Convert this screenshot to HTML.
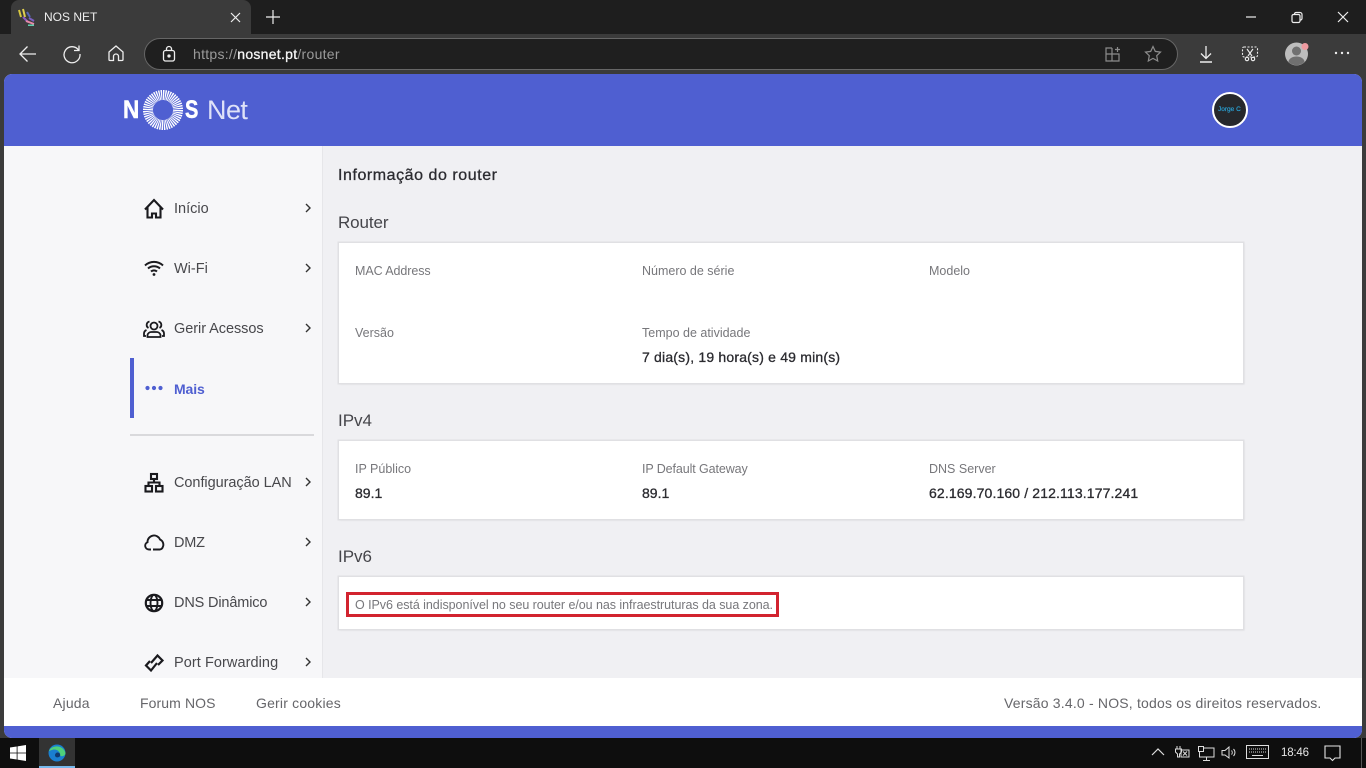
<!DOCTYPE html>
<html lang="pt">
<head>
<meta charset="utf-8">
<title>NOS NET</title>
<style>
html,body{margin:0;padding:0;width:1366px;height:768px;overflow:hidden;background:#3b3b3b;font-family:"Liberation Sans",sans-serif}
div,span.t,svg{position:absolute}
.t{position:absolute;white-space:nowrap;line-height:20px;height:20px}
.nav{font-size:14.5px;color:#48484c;left:174px}
.lab{font-size:12.5px;color:#77777b}
.val{font-size:14px;color:#2b2b30;-webkit-text-stroke:.3px #2b2b30}
.h2{font-size:17px;color:#45454a;left:338px}
.card{left:339px;width:904px;background:#fff;box-shadow:0 0 0 1.5px #e0e0e3,1px 1px 2px #d8d8dc}
.foot{font-size:14px;color:#66666a;letter-spacing:.19px}
.chev{left:304px;width:8px;height:10px}
.ic{left:143px;width:22px;height:22px}
</style>
</head>
<body>
<!-- browser chrome -->
<div style="left:0;top:0;width:1366px;height:34px;background:#1e1e1e"></div>
<div style="left:0;top:34px;width:1366px;height:40px;background:#3b3b3b"></div>
<div style="left:11px;top:0;width:240px;height:34px;background:#3b3b3b;border-radius:8px 8px 0 0"></div>
<svg style="left:17px;top:8px" width="18" height="18" viewBox="0 0 18 18" fill="none" stroke-width="2">
<path d="M2 2l2 7" stroke="#d8c840"/><path d="M6 1l2 8" stroke="#e0d050"/><path d="M10 4l3 5" stroke="#5a6ac8" opacity=".9"/><path d="M6 9l5 5" stroke="#8a5ac0"/><path d="M9 13l8 3" stroke="#e88aa8"/><path d="M12 10l5 3" stroke="#7a60c0"/><path d="M11 17.500h6" stroke="#60d0b0"/>
</svg>
<span class="t" style="left:44px;top:7px;font-size:12px;color:#eee">NOS NET</span>
<svg style="left:230px;top:12px" width="11" height="11" viewBox="0 0 11 11" stroke="#eee" stroke-width="1.2"><path d="M1 1l9 9M10 1l-9 9"/></svg>
<svg style="left:265px;top:9px" width="16" height="16" viewBox="0 0 16 16" stroke="#eee" stroke-width="1.2"><path d="M8 1v14M1 8h14"/></svg>
<svg style="left:1245px;top:11px" width="110" height="14" viewBox="0 0 110 14" fill="none" stroke="#eee" stroke-width="1.2">
<path d="M1 6h10"/>
<rect x="47" y="3.5" width="8" height="8" rx="1.5"/><path d="M49.5 3.5v-.5a1.5 1.5 0 0 1 1.5-1.5h4a2 2 0 0 1 2 2v4a1.5 1.5 0 0 1-1.5 1.5h-.5"/>
<path d="M93 1l10 10M103 1l-10 10"/>
</svg>
<svg style="left:18px;top:44px" width="20" height="20" viewBox="0 0 20 20" fill="none" stroke="#eee" stroke-width="1.3"><path d="M2 10h16M9.5 2.500L2 10l7.5 7.500"/></svg>
<svg style="left:62px;top:44px" width="20" height="20" viewBox="0 0 20 20" fill="none" stroke="#eee" stroke-width="1.3"><path d="M16.5 6A8 8 0 1 0 18 10"/><path d="M17 1.500V6.500h-5"/></svg>
<svg style="left:107px;top:44px" width="18" height="18" viewBox="0 0 18 18" fill="none" stroke="#eee" stroke-width="1.3"><path d="M2 8l7-6 7 6v7.500a1 1 0 0 1-1 1h-3.500v-4a2.500 2.500 0 0 0-5 0v4H3a1 1 0 0 1-1-1z"/></svg>
<div style="left:144px;top:38px;width:1032px;height:30px;background:#1f1f1f;border:1px solid #666;border-radius:16px"></div>
<svg style="left:162px;top:45px" width="14" height="18" viewBox="0 0 14 18" fill="none" stroke="#eee" stroke-width="1.3"><rect x="1.5" y="5.500" width="11" height="10.500" rx="2"/><path d="M4.5 5.500V4a2.500 2.500 0 0 1 5 0v1.500"/><circle cx="7" cy="11" r="1" fill="#eee"/></svg>
<span class="t" style="left:193px;top:44px;font-size:14px;color:#9a9a9a;letter-spacing:.28px">https://<span style="color:#f6f6f6;-webkit-text-stroke:.3px #f6f6f6">nosnet.pt</span>/router</span>
<svg style="left:1104px;top:45px" width="18" height="18" viewBox="0 0 18 18" fill="none" stroke="#8c8c8c" stroke-width="1.2"><path d="M8 3H2v13h13V9H2M8 3v13M11 4.500h5M13.500 2v5"/></svg>
<svg style="left:1144px;top:45px" width="18" height="18" viewBox="0 0 18 18" fill="none" stroke="#8c8c8c" stroke-width="1.2"><path d="M9 1.500l2.300 4.900 5.200.7-3.800 3.600 1 5.300L9 13.400 4.300 16l1-5.300L1.500 7.100l5.200-.7z"/></svg>
<svg style="left:1198px;top:45px" width="16" height="18" viewBox="0 0 16 18" fill="none" stroke="#eee" stroke-width="1.3"><path d="M8 1v12M3 8.500L8 13.500l5-5"/><path d="M2 17h12" stroke-width="1.5"/></svg>
<svg style="left:1241px;top:45px" width="18" height="18" viewBox="0 0 18 18" fill="none" stroke="#eee" stroke-width="1.1"><rect x="1.5" y="2" width="15" height="10" rx="1.5" stroke-dasharray="2 1.500"/><path d="M6 4l5 7M12 4L7 11"/><circle cx="6" cy="14" r="1.700"/><circle cx="12" cy="14" r="1.700"/></svg>
<svg style="left:1284px;top:41px" width="28" height="26" viewBox="0 0 28 26"><circle cx="12.5" cy="13" r="11.500" fill="#bdbdbd"/><circle cx="12.5" cy="10" r="4.500" fill="#707070"/><path d="M4.500 21a8 5.500 0 0 1 16 0 11.500 11.500 0 0 1-16 0z" fill="#707070"/><circle cx="21" cy="5.500" r="3.500" fill="#ee9aa0"/></svg>
<svg style="left:1334px;top:50px" width="16" height="6" viewBox="0 0 16 6" fill="#eee"><circle cx="2" cy="3" r="1.200"/><circle cx="8" cy="3" r="1.200"/><circle cx="14" cy="3" r="1.200"/></svg>

<!-- app window -->
<div style="left:4px;top:74px;width:1358px;height:664px;background:#f0f0f3;border-radius:8px;overflow:hidden">
  <div style="left:0;top:0;width:1358px;height:72px;background:#4f5fd1"></div>
  <div style="left:0;top:72px;width:318px;height:532px;background:#f7f7f9;border-right:1.5px solid #e6e6e9"></div>
  <div style="left:0;top:604px;width:1358px;height:48px;background:#fff"></div>
  <div style="left:0;top:652px;width:1358px;height:12px;background:#4f5fd1"></div>
</div>

<!-- logo -->
<span class="t" style="left:123px;top:99px;font-size:25px;line-height:22px;height:22px;font-weight:bold;color:#fff;-webkit-text-stroke:.5px #fff;transform:scaleX(.9);transform-origin:left center">N</span>
<svg style="left:143px;top:90px" width="40" height="40" viewBox="0 0 40 40"><circle cx="20" cy="20" r="15" fill="none" stroke="#fff" stroke-width="10" stroke-dasharray="1.2 .76"/></svg>
<span class="t" style="left:185px;top:99px;font-size:25px;line-height:22px;height:22px;font-weight:bold;color:#fff;-webkit-text-stroke:.5px #fff;transform:scaleX(.8);transform-origin:left center">S</span>
<span class="t" style="left:207px;top:99px;font-size:27px;line-height:22px;height:22px;color:#dfe2f8;letter-spacing:-.55px">Net</span>
<div style="left:1212px;top:92px;width:32px;height:32px;border:2px solid #fff;border-radius:50%;background:#26282c"></div>
<span class="t" style="left:1218px;top:100px;font-size:6.5px;color:#2aa4d8;line-height:20px;-webkit-text-stroke:.15px #2aa4d8">Jorge C</span>

<!-- sidebar -->
<div style="left:130px;top:358px;width:4px;height:60px;background:#4f5fd1"></div>
<div style="left:130px;top:434px;width:184px;height:1.5px;background:#d9d9dc"></div>

<svg class="ic" style="top:198px" viewBox="0 0 22 22" fill="none" stroke="#1a1a1e" stroke-width="2.100"><path d="M2 11.500L11 2l9 9.500"/><path d="M4.500 9v10.500h4.500v-4h4v4h4.500V9"/></svg>
<span class="t nav" style="top:199px">Início</span>
<svg class="ic" style="top:258px" viewBox="0 0 22 22" fill="none" stroke="#1a1a1e" stroke-width="2"><path d="M2 7.500a13 13 0 0 1 18 0M5 10.500a9 9 0 0 1 12 0M8 13.500a4.500 4.500 0 0 1 6 0"/><circle cx="11" cy="16.500" r="1.400" fill="#1a1a1e" stroke="none"/></svg>
<span class="t nav" style="top:259px">Wi-Fi</span>
<svg class="ic" style="top:318px" viewBox="0 0 22 22" fill="none" stroke="#1a1a1e" stroke-width="1.800"><circle cx="11" cy="8" r="3.500"/><path d="M4.500 19v-2a4 4 0 0 1 4-3h5a4 4 0 0 1 4 3v2z"/><path d="M6.500 3.500a3.500 3.500 0 0 0-1 6.500M15.500 3.500a3.500 3.500 0 0 1 1 6.500M3.500 12a4 4 0 0 0-2.500 4v2h2M18.500 12a4 4 0 0 1 2.500 4v2h-2"/></svg>
<span class="t nav" style="top:319px;letter-spacing:-.05px">Gerir Acessos</span>
<svg class="ic" style="top:378px" viewBox="0 0 22 22" fill="#4f5fd1"><circle cx="4.5" cy="10" r="2.100"/><circle cx="11" cy="10" r="2.100"/><circle cx="17.5" cy="10" r="2.100"/></svg>
<span class="t nav" style="top:379px;color:#4f5fd1;font-weight:bold;font-size:14px;letter-spacing:-.1px">Mais</span>
<svg class="ic" style="top:472px" viewBox="0 0 22 22" fill="none" stroke="#1a1a1e" stroke-width="2.100"><rect x="8" y="2" width="6" height="5"/><rect x="2.500" y="14" width="6.500" height="5.500"/><rect x="13" y="14" width="6.500" height="5.500"/><path d="M11 7v3.500M5.500 14v-3.500h11V14"/></svg>
<span class="t nav" style="top:473px;letter-spacing:-.05px">Configuração LAN</span>
<svg class="ic" style="top:532px" viewBox="0 0 22 22" fill="none" stroke="#1a1a1e" stroke-width="1.900"><path d="M8 17.500H6a3.800 3.800 0 0 1-1.500-7.300A6.500 6.500 0 0 1 17 7.500a5.500 5.500 0 0 1 2.800 7.500 3.500 3.500 0 0 1-2.800 2.500h-7"/></svg>
<span class="t nav" style="top:533px;letter-spacing:-.2px">DMZ</span>
<svg class="ic" style="top:592px" viewBox="0 0 22 22" fill="none" stroke="#1a1a1e" stroke-width="1.900"><circle cx="11" cy="11" r="8.200" stroke-width="2.200"/><ellipse cx="11" cy="11" rx="3.500" ry="8.200"/><path d="M3 8h16M3 14h16"/></svg>
<span class="t nav" style="top:593px;letter-spacing:-.15px">DNS Dinâmico</span>
<svg class="ic" style="top:652px" viewBox="0 0 22 22" fill="none" stroke="#1a1a1e" stroke-width="2.200"><path d="M8 11l6.500-7.500 5 5-4.500 4.500"/><path d="M14 11l-6 7.500-5-5 4-4.500"/></svg>
<span class="t nav" style="top:653px;letter-spacing:.07px">Port Forwarding</span>

<svg class="chev" style="top:203px" viewBox="0 0 8 10" fill="none" stroke="#333" stroke-width="1.4"><path d="M2 1l4 4-4 4"/></svg>
<svg class="chev" style="top:263px" viewBox="0 0 8 10" fill="none" stroke="#333" stroke-width="1.4"><path d="M2 1l4 4-4 4"/></svg>
<svg class="chev" style="top:323px" viewBox="0 0 8 10" fill="none" stroke="#333" stroke-width="1.4"><path d="M2 1l4 4-4 4"/></svg>
<svg class="chev" style="top:477px" viewBox="0 0 8 10" fill="none" stroke="#333" stroke-width="1.4"><path d="M2 1l4 4-4 4"/></svg>
<svg class="chev" style="top:537px" viewBox="0 0 8 10" fill="none" stroke="#333" stroke-width="1.4"><path d="M2 1l4 4-4 4"/></svg>
<svg class="chev" style="top:597px" viewBox="0 0 8 10" fill="none" stroke="#333" stroke-width="1.4"><path d="M2 1l4 4-4 4"/></svg>
<svg class="chev" style="top:657px" viewBox="0 0 8 10" fill="none" stroke="#333" stroke-width="1.4"><path d="M2 1l4 4-4 4"/></svg>

<!-- content -->
<span class="t" style="left:338px;top:166px;font-size:16px;color:#2b2b30;-webkit-text-stroke:.3px #2b2b30;letter-spacing:.55px">Informação do router</span>
<span class="t h2" style="top:213px;letter-spacing:-.1px">Router</span>
<div class="card" style="top:243px;height:140px"></div>
<span class="t lab" style="left:355px;top:261px;letter-spacing:-.08px">MAC Address</span>
<span class="t lab" style="left:642px;top:261px">Número de série</span>
<span class="t lab" style="left:929px;top:261px">Modelo</span>
<span class="t lab" style="left:355px;top:323px">Versão</span>
<span class="t lab" style="left:642px;top:323px">Tempo de atividade</span>
<span class="t val" style="left:642px;top:347px;letter-spacing:.19px">7 dia(s), 19 hora(s) e 49 min(s)</span>

<span class="t h2" style="top:411px">IPv4</span>
<div class="card" style="top:441px;height:78px"></div>
<span class="t lab" style="left:355px;top:459px">IP Público</span>
<span class="t lab" style="left:642px;top:459px;letter-spacing:-.1px">IP Default Gateway</span>
<span class="t lab" style="left:929px;top:459px">DNS Server</span>
<span class="t val" style="left:355px;top:483px">89.1</span>
<span class="t val" style="left:642px;top:483px">89.1</span>
<span class="t val" style="left:929px;top:483px;letter-spacing:.13px">62.169.70.160 / 212.113.177.241</span>

<span class="t h2" style="top:547px">IPv6</span>
<div class="card" style="top:577px;height:52px"></div>
<div style="left:346px;top:592px;width:427px;height:19px;border:3px solid #d2232f"></div>
<span class="t" style="left:355px;top:595px;font-size:12.5px;color:#77777b;letter-spacing:-.05px">O IPv6 está indisponível no seu router e/ou nas infraestruturas da sua zona.</span>

<!-- footer -->
<span class="t foot" style="left:53px;top:693px">Ajuda</span>
<span class="t foot" style="left:140px;top:693px;letter-spacing:.1px">Forum NOS</span>
<span class="t foot" style="left:256px;top:693px">Gerir cookies</span>
<span class="t foot" style="left:1004px;top:693px">Versão 3.4.0 - NOS, todos os direitos reservados.</span>

<!-- taskbar -->
<div style="left:0;top:738px;width:1366px;height:30px;background:#0e0e0e"></div>
<svg style="left:10px;top:745px" width="16" height="16" viewBox="0 0 16 16" fill="#fff"><path d="M0 2.500l6.700-1v6.100H0zM7.500 1.400L16 0v7.600H7.500zM0 8.400h6.700v6.100l-6.700-1zM7.500 8.400H16V16l-8.500-1.400z"/></svg>
<div style="left:39px;top:738px;width:36px;height:30px;background:#333"></div>
<div style="left:39px;top:766px;width:36px;height:2px;background:#76b9ed"></div>
<svg style="left:48px;top:744px" width="18" height="18" viewBox="0 0 18 18"><circle cx="9" cy="9" r="8.500" fill="#1a7fd0"/><path d="M1 7C3 1 15 0 17.500 9c0 3-4 4-5.500 2.500C13 8 9 5 5.500 5.500 3 6 1.500 7 1 7z" fill="#4fd07a"/><path d="M9 8.500c3-.5 3.500 2.500 3 3.500-1 2-5 2-5-1 0-1 1-2.300 2-2.500z" fill="#0e3a70"/></svg>
<svg style="left:1151px;top:747px" width="14" height="10" viewBox="0 0 14 10" fill="none" stroke="#ddd" stroke-width="1.2"><path d="M1 8l6-6 6 6"/></svg>
<svg style="left:1173px;top:746px" width="18" height="14" viewBox="0 0 18 14" fill="none" stroke="#ddd" stroke-width="1"><path d="M4 0v3M7 0v3M2.500 3h6v3l-2 2v3h-2V8l-2-2z"/><rect x="8" y="4" width="8" height="7"/><path d="M10 5.500l4 4M14 5.500l-4 4"/></svg>
<svg style="left:1197px;top:746px" width="18" height="16" viewBox="0 0 18 16" fill="none" stroke="#ddd" stroke-width="1"><rect x="1.5" y=".5" width="5" height="5"/><path d="M7 2h10v9H2.500V6M9.500 11v3M6 14.500h7"/></svg>
<svg style="left:1221px;top:746px" width="18" height="14" viewBox="0 0 18 14" fill="none" stroke="#ddd" stroke-width="1"><path d="M1 4.500h3L8 1v11L4 9H1zM10.500 4.500a3 3 0 0 1 0 4M12.500 3a5 5 0 0 1 0 7" /></svg>
<svg style="left:1246px;top:745px" width="24" height="15" viewBox="0 0 24 15" fill="none" stroke="#ddd" stroke-width="1"><rect x=".5" y=".5" width="22" height="13"/><path d="M3 4h17M3 7h17" stroke-dasharray="1 1"/><path d="M6 10.500h11"/></svg>
<span class="t" style="left:1281px;top:743px;font-size:11.5px;color:#e6e6e6;letter-spacing:-.2px">18:46</span>
<svg style="left:1324px;top:745px" width="18" height="17" viewBox="0 0 18 17" fill="none" stroke="#e6e6e6" stroke-width="1.1"><path d="M1 1h15v12h-5l-2.500 2.500L6 13H1z"/></svg>
<div style="left:1361px;top:738px;width:1px;height:30px;background:#555"></div>
</body>
</html>
